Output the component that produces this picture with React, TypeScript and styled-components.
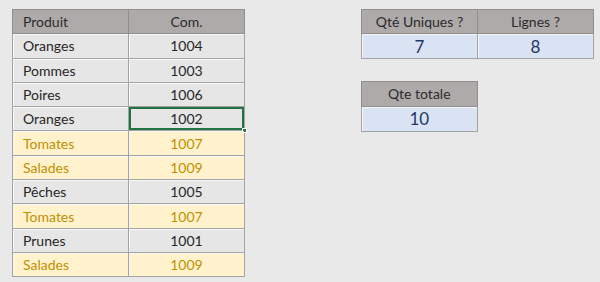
import React from "react";
import styled, { createGlobalStyle, css } from "styled-components";

const GlobalStyle = createGlobalStyle`
  body {
    margin: 0;
    background: #e9e9e9;
    font-family: Lato, "Open Sans", "Liberation Sans", sans-serif;
  }
`;

interface Order {
  product: string;
  qty: number;
  flagged?: boolean;
}

const orders: Order[] = [
  { product: "Oranges", qty: 1004 },
  { product: "Pommes", qty: 1003 },
  { product: "Poires", qty: 1006 },
  { product: "Oranges", qty: 1002 },
  { product: "Tomates", qty: 1007, flagged: true },
  { product: "Salades", qty: 1009, flagged: true },
  { product: "Pêches", qty: 1005 },
  { product: "Tomates", qty: 1007, flagged: true },
  { product: "Prunes", qty: 1001 },
  { product: "Salades", qty: 1009, flagged: true },
];

const Sheet = styled.div`
  display: flex;
  align-items: flex-start;
  gap: 116px;
  padding: 9px 6px 0 12px;
  width: 600px;
  height: 282px;
  box-sizing: border-box;
`;

const Side = styled.div`
  display: flex;
  flex-direction: column;
  align-items: flex-start;
  gap: 22px;
  flex-shrink: 0;
`;

const Grid = styled.table<{ $cols: number }>`
  border-collapse: collapse;
  table-layout: fixed;
  flex-shrink: 0;
  width: ${(p) => p.$cols * 116.5}px;
  font-size: 14px;
`;

const HeadCell = styled.th<{ $left?: boolean }>`
  height: 24.3px;
  padding: 0 10px;
  box-sizing: border-box;
  background: #aeaaaa;
  color: #2b2b2b;
  font-weight: 400;
  text-align: ${(p) => (p.$left ? "left" : "center")};
  border: 1px solid #8f8f8f;
`;

const Cell = styled.td<{ $left?: boolean; $flagged?: boolean; $selected?: boolean }>`
  position: relative;
  height: 24.3px;
  padding: 0 10px;
  box-sizing: border-box;
  background: ${(p) => (p.$flagged ? "#fff2cc" : "#e7e6e6")};
  color: ${(p) => (p.$flagged ? "#bf8f00" : "#262626")};
  text-align: ${(p) => (p.$left ? "left" : "center")};
  border: 1px solid #a3a3a3;
  box-shadow: inset 1px 1px 0 #f7f7f7;
  ${(p) =>
    p.$selected &&
    css`
      box-shadow: inset 0 0 0 2px #217346;
      &::after {
        content: "";
        position: absolute;
        right: -3px;
        bottom: -3px;
        width: 5px;
        height: 5px;
        background: #217346;
        border: 1px solid #fff;
        box-sizing: border-box;
      }
    `}
`;

const ValueCell = styled.td`
  height: 25px;
  box-sizing: border-box;
  background: #dae3f3;
  color: #1f3864;
  font-size: 17px;
  text-align: center;
  border: 1px solid #a3a3a3;
  box-shadow: inset 1px 1px 0 #f4f6fb;
`;

const App = () => (
  <>
    <GlobalStyle />
    <Sheet>
      <Grid $cols={2}>
        <thead>
          <tr>
            <HeadCell $left>Produit</HeadCell>
            <HeadCell>Com.</HeadCell>
          </tr>
        </thead>
        <tbody>
          {orders.map((o, i) => (
            <tr key={i}>
              <Cell $left $flagged={o.flagged}>
                {o.product}
              </Cell>
              <Cell $flagged={o.flagged} $selected={i === 3}>
                {o.qty}
              </Cell>
            </tr>
          ))}
        </tbody>
      </Grid>
      <Side>
        <Grid $cols={2}>
          <thead>
            <tr>
              <HeadCell>Qté Uniques ?</HeadCell>
              <HeadCell>Lignes ?</HeadCell>
            </tr>
          </thead>
          <tbody>
            <tr>
              <ValueCell>7</ValueCell>
              <ValueCell>8</ValueCell>
            </tr>
          </tbody>
        </Grid>
        <Grid $cols={1}>
          <thead>
            <tr>
              <HeadCell>Qte totale</HeadCell>
            </tr>
          </thead>
          <tbody>
            <tr>
              <ValueCell>10</ValueCell>
            </tr>
          </tbody>
        </Grid>
      </Side>
    </Sheet>
  </>
);

export default App;
